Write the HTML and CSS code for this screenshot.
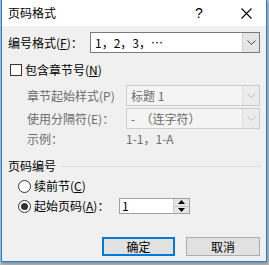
FILE: index.html
```html
<!DOCTYPE html>
<html lang="zh-CN">
<head>
  <meta charset="UTF-8" />
  <title>页码格式</title>
  <link rel="stylesheet" href="styles.css">
</head>
<body>
  <div class="window">
    <div class="titlebar">
      <span class="title">页码格式</span>
      <span class="help">?</span>
      <span class="close">
        <svg width="11" height="11" viewBox="0 0 11 11"><path d="M0.5 0.5 L10.5 10.5 M10.5 0.5 L0.5 10.5" stroke="#000" stroke-width="1.1" fill="none"/></svg>
      </span>
    </div>

    <div class="content">
      <!-- number format -->
      <div class="row first">
        <span class="label fmt-label">编号格式(<u>F</u>)：</span>
        <div class="combo fmt-combo">
          <span class="value">1，2，3，…</span>
          <span class="drop"><svg width="9" height="5" viewBox="0 0 9 5"><path d="M0.5 0.5 L4.5 4.5 L8.5 0.5" stroke="#444" fill="none"/></svg></span>
        </div>
      </div>

      <!-- include chapter -->
      <div class="check-row">
        <span class="checkbox"></span>
        <span>包含章节号(<u>N</u>)</span>
      </div>

      <div class="row sub">
        <span class="label dim chap-label">章节起始样式(P)</span>
        <div class="combo disabled chap-combo">
          <span class="value">标题 1</span>
          <span class="drop"><svg width="9" height="5" viewBox="0 0 9 5"><path d="M0.5 0.5 L4.5 4.5 L8.5 0.5" stroke="#bcbcbc" fill="none"/></svg></span>
        </div>
      </div>

      <div class="row sub second">
        <span class="label dim chap-label">使用分隔符(E)：</span>
        <div class="combo disabled chap-combo">
          <span class="value">-&nbsp;&nbsp;（连字符）</span>
          <span class="drop"><svg width="9" height="5" viewBox="0 0 9 5"><path d="M0.5 0.5 L4.5 4.5 L8.5 0.5" stroke="#bcbcbc" fill="none"/></svg></span>
        </div>
      </div>

      <div class="row sub example">
        <span class="label dim chap-label">示例：</span>
        <span class="dim example-value">1-1，1-A</span>
      </div>

      <!-- page numbering group -->
      <div class="group-head">
        <span>页码编号</span>
        <span class="group-line"></span>
      </div>

      <div class="radio-row">
        <span class="radio"></span>
        <span>续前节(<u>C</u>)</span>
      </div>

      <div class="radio-row start">
        <span class="radio checked"></span>
        <span class="start-label">起始页码(<u>A</u>)：</span>
        <div class="spin">
          <span class="spin-value">1</span>
          <span class="spin-btns">
            <span class="spin-btn"><svg width="7" height="4" viewBox="0 0 7 4"><path d="M3.5 0 L7 4 L0 4 Z" fill="#000"/></svg></span>
            <span class="spin-btn"><svg width="7" height="4" viewBox="0 0 7 4"><path d="M0 0 L7 0 L3.5 4 Z" fill="#000"/></svg></span>
          </span>
        </div>
      </div>

      <div class="buttons">
        <button class="btn default">确定</button>
        <button class="btn">取消</button>
      </div>
    </div>
  </div>
</body>
</html>
```

FILE: styles.css
```css
* { margin: 0; padding: 0; box-sizing: border-box; }

body {
  background: #b9bcbf;
  font-family: "Noto Sans CJK SC", "Liberation Sans", sans-serif;
  font-size: 12px;
  color: #000;
  width: 269px;
  height: 265px;
  overflow: hidden;
}

u { text-decoration: underline; text-underline-offset: 1px; }

.window {
  margin-left: 1px;
  width: 266px;
  height: 262px;
  background: #f0f0f0;
  border: 1px solid #1883d7;
  border-top: none;
  box-shadow: 1px 2px 3px rgba(0,0,0,0.25);
}

.titlebar {
  height: 26px;
  background: #fff;
  display: flex;
  align-items: center;
  padding-left: 6px;
}
.title { font-size: 12px; line-height: 14px; }
.help { margin-left: auto; font-size: 14px; font-family: "Liberation Sans", sans-serif; width: 10px; margin-right: 36px; }
.close { width: 11px; height: 11px; margin-right: 14px; display: flex; }

.content { padding: 6px 5px 0 6px; }

.row { display: flex; align-items: center; height: 21px; }
.label { white-space: nowrap; line-height: 14px; }
.dim { color: #6d6d6d; }
.fmt-label { width: 82px; }

.combo {
  height: 21px;
  border: 1px solid #7a7a7a;
  background: #fff;
  display: flex;
  align-items: center;
}
.combo .value { flex: 1; padding-left: 4px; white-space: nowrap; line-height: 14px; }
.combo .drop {
  width: 17px;
  height: 19px;
  background: #e5e5e5;
  border-left: 1px solid #cfcfcf;
  display: flex;
  align-items: center;
  justify-content: center;
}
.fmt-combo { width: 170px; }

.combo.disabled { border-color: #cccccc; background: #f4f4f4; color: #6d6d6d; }
.combo.disabled .drop { background: #ececec; border-left-color: #dedede; }

.check-row { display: flex; align-items: center; height: 13px; margin-top: 10px; line-height: 14px; }
.checkbox {
  width: 12px;
  height: 12px;
  margin-left: 2px;
  margin-right: 3px;
  border: 1px solid #333;
  background: #fff;
}

.sub { padding-left: 19px; margin-top: 9px; }
.sub.second { margin-top: 2px; }
.chap-label { width: 99px; }
.chap-combo { width: 134px; }
.example { height: 14px; margin-top: 3px; }
.example-value { line-height: 14px; }

.group-head { display: flex; align-items: center; margin-top: 13px; height: 14px; line-height: 14px; }
.group-line { flex: 1; height: 1px; background: #dcdcdc; margin-left: 6px; margin-right: 0; }

.radio-row { display: flex; align-items: center; height: 14px; margin-top: 6px; line-height: 14px; }
.radio {
  width: 13px;
  height: 13px;
  margin-left: 10px;
  margin-right: 3px;
  border: 1px solid #333;
  border-radius: 50%;
  background: #fff;
  display: flex;
  align-items: center;
  justify-content: center;
}
.radio.checked::after {
  content: "";
  width: 7px;
  height: 7px;
  border-radius: 50%;
  background: #333;
}
.radio-row.start { height: 16px; margin-top: 5px; }
.start-label { width: 85px; }

.spin {
  width: 71px;
  height: 16px;
  border: 1px solid #a0a0a0;
  background: #fff;
  display: flex;
}
.spin-value { flex: 1; padding-left: 2px; line-height: 14px; }
.spin-btns { width: 16px; display: flex; flex-direction: column; border-left: 1px solid #cfcfcf; }
.spin-btn {
  flex: 1;
  background: #e5e5e5;
  display: flex;
  align-items: center;
  justify-content: center;
}
.spin-btn + .spin-btn { border-top: 1px solid #c8c8c8; }

.buttons { display: flex; justify-content: flex-end; gap: 11px; margin-top: 23px; padding-right: 1px; }
.btn {
  width: 74px;
  height: 19px;
  background: #e1e1e1;
  border: 1px solid #adadad;
  font-family: "Noto Sans CJK SC", sans-serif;
  font-size: 12px;
  line-height: 14px;
  color: #000;
}
.btn.default { width: 73px; border: 2px solid #0078d7; }
```
